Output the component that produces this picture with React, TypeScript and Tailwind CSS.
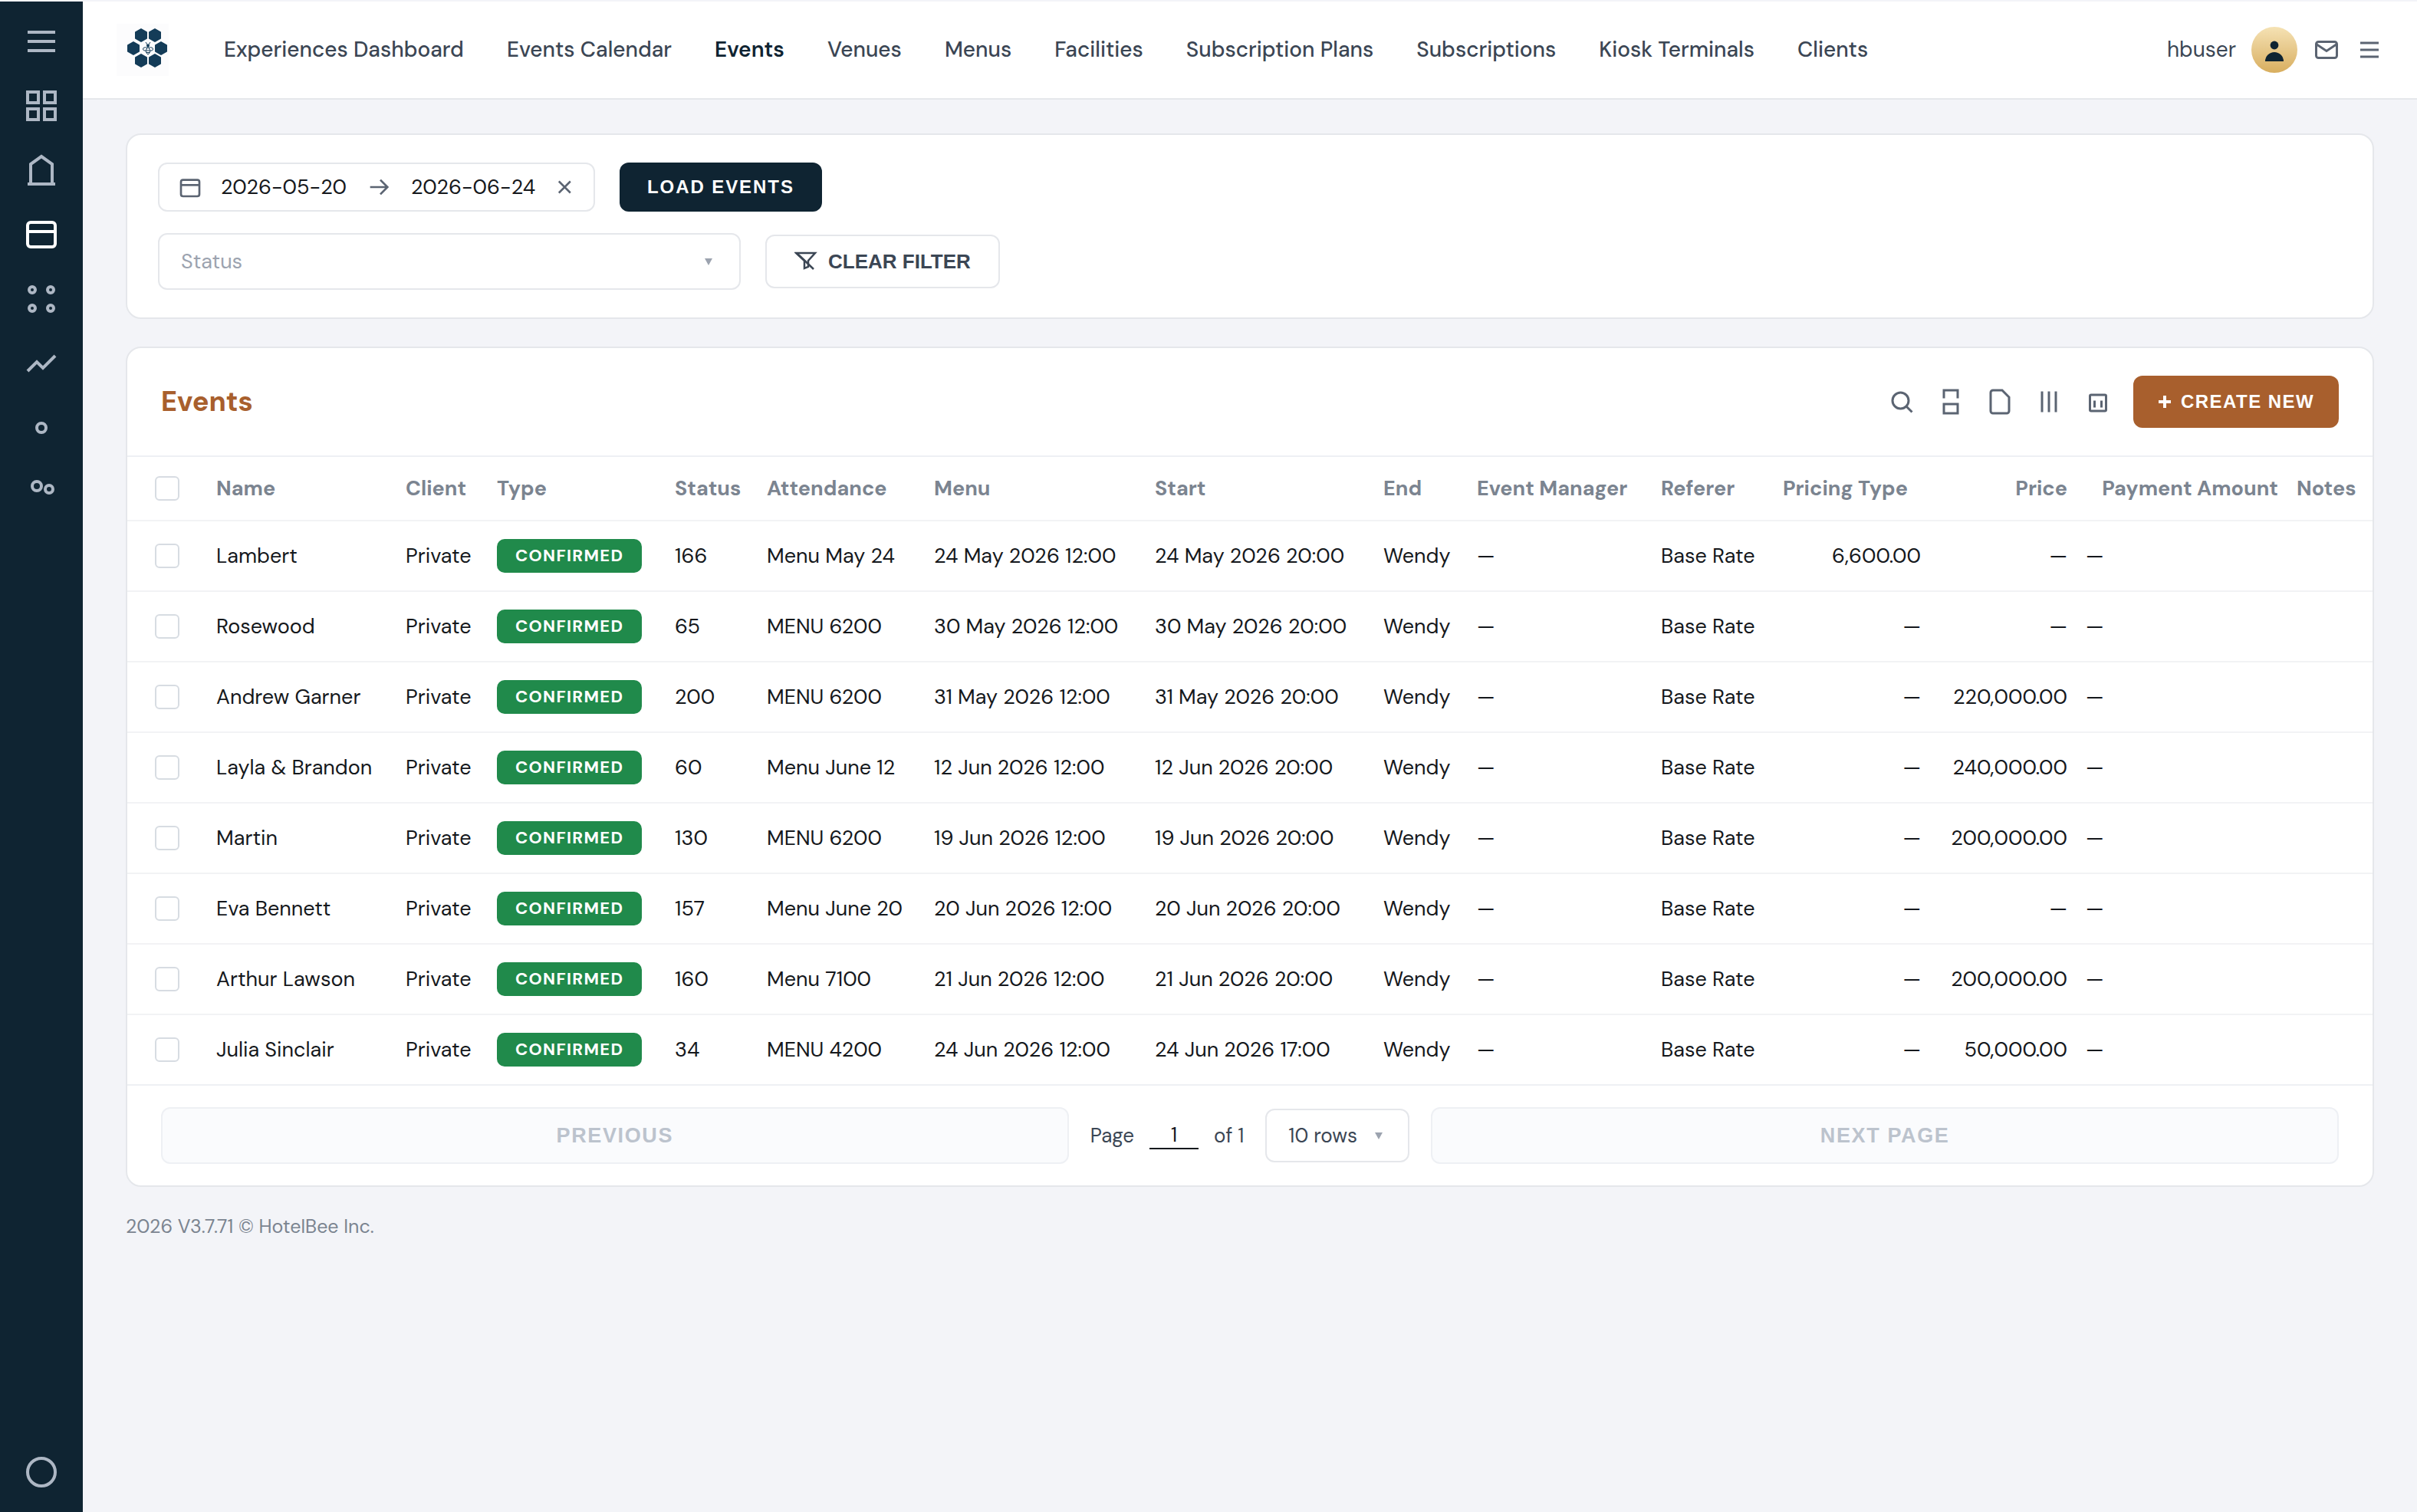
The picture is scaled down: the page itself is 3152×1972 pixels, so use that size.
import React, { useState } from 'react';
import clsx from 'clsx';

const navItems = [
  'Experiences Dashboard',
  'Events Calendar',
  'Events',
  'Venues',
  'Menus',
  'Facilities',
  'Subscription Plans',
  'Subscriptions',
  'Kiosk Terminals',
  'Clients',
];

const columns = [
  { title: 'Name', width: 'w-[247px]' },
  { title: 'Client', width: 'w-[119px]' },
  { title: 'Type', width: 'w-[232px]' },
  { title: 'Status', width: 'w-[120px]' },
  { title: 'Attendance', width: 'w-[218px]' },
  { title: 'Menu', width: 'w-[288px]' },
  { title: 'Start', width: 'w-[298px]' },
  { title: 'End', width: 'w-[122px]' },
  { title: 'Event Manager', width: 'w-[240px]' },
  { title: 'Referer', width: 'w-[159px]' },
  { title: 'Pricing Type', width: 'w-[204px]' },
  { title: 'Price', width: 'w-[191px]', right: true },
  { title: 'Payment Amount', width: 'w-[275px]', right: true },
  { title: 'Notes', width: 'w-[111px]' },
];

const events = [
  { name: 'Lambert', guests: '166', menu: 'Menu May 24', start: '24 May 2026 12:00', end: '24 May 2026 20:00', rate: '6,600.00', price: '—' },
  { name: 'Rosewood', guests: '65', menu: 'MENU 6200', start: '30 May 2026 12:00', end: '30 May 2026 20:00', rate: '—', price: '—' },
  { name: 'Andrew Garner', guests: '200', menu: 'MENU 6200', start: '31 May 2026 12:00', end: '31 May 2026 20:00', rate: '—', price: '220,000.00' },
  { name: 'Layla & Brandon', guests: '60', menu: 'Menu June 12', start: '12 Jun 2026 12:00', end: '12 Jun 2026 20:00', rate: '—', price: '240,000.00' },
  { name: 'Martin', guests: '130', menu: 'MENU 6200', start: '19 Jun 2026 12:00', end: '19 Jun 2026 20:00', rate: '—', price: '200,000.00' },
  { name: 'Eva Bennett', guests: '157', menu: 'Menu June 20', start: '20 Jun 2026 12:00', end: '20 Jun 2026 20:00', rate: '—', price: '—' },
  { name: 'Arthur Lawson', guests: '160', menu: 'Menu 7100', start: '21 Jun 2026 12:00', end: '21 Jun 2026 20:00', rate: '—', price: '200,000.00' },
  { name: 'Julia Sinclair', guests: '34', menu: 'MENU 4200', start: '24 Jun 2026 12:00', end: '24 Jun 2026 17:00', rate: '—', price: '50,000.00' },
];

function Icon({
  className,
  stroke = 2,
  children,
}: {
  className: string;
  stroke?: number;
  children: React.ReactNode;
}) {
  return (
    <svg
      viewBox="0 0 24 24"
      fill="none"
      stroke="currentColor"
      strokeWidth={stroke}
      className={clsx('shrink-0', className)}
      aria-hidden="true"
    >
      {children}
    </svg>
  );
}

const sideIcons = [
  { label: 'Menu', icon: <path d="M3 6h18M3 12h18M3 18h18" /> },
  {
    label: 'Dashboard',
    icon: (
      <>
        <rect x="3" y="3" width="7" height="7" />
        <rect x="14" y="3" width="7" height="7" />
        <rect x="3" y="14" width="7" height="7" />
        <rect x="14" y="14" width="7" height="7" />
      </>
    ),
  },
  { label: 'Property', icon: <path d="M3 21h18M5 21V8l7-5 7 5v13" /> },
  {
    label: 'Events',
    active: true,
    icon: (
      <>
        <rect x="3" y="4" width="18" height="16" rx="2" />
        <path d="M3 10h18" />
      </>
    ),
  },
  {
    label: 'Apps',
    icon: (
      <>
        <circle cx="6" cy="6" r="2" />
        <circle cx="18" cy="6" r="2" />
        <circle cx="6" cy="18" r="2" />
        <circle cx="18" cy="18" r="2" />
      </>
    ),
  },
  { label: 'Reports', icon: <path d="M3 17l6-6 4 4 8-8" /> },
  { label: 'Settings', icon: <circle cx="12" cy="12" r="3" /> },
  {
    label: 'Users',
    icon: (
      <>
        <circle cx="9" cy="8" r="3" />
        <circle cx="17" cy="10" r="2.5" />
      </>
    ),
  },
];

const tools = [
  {
    label: 'Search',
    icon: (
      <>
        <circle cx="11" cy="11" r="7" />
        <path d="M16 16l5 5" />
      </>
    ),
  },
  {
    label: 'Print',
    icon: (
      <>
        <path d="M6 9V2h12v7" />
        <rect x="6" y="14" width="12" height="8" />
      </>
    ),
  },
  {
    label: 'Export',
    icon: <path d="M14 2H6a2 2 0 0 0-2 2v16a2 2 0 0 0 2 2h12a2 2 0 0 0 2-2V8z" />,
  },
  { label: 'Columns', icon: <path d="M6 3v18M12 3v18M18 3v18" /> },
  {
    label: 'Delete',
    icon: (
      <>
        <rect x="5" y="6" width="14" height="14" rx="1" />
        <path d="M9 11v6M15 11v6" />
      </>
    ),
  },
];

function Logo() {
  const cells = [
    [32, 15],
    [50, 15],
    [22, 32],
    [58, 32],
    [32, 48],
    [50, 48],
  ];
  return (
    <svg viewBox="0 0 68 68" className="size-[68px] shrink-0 bg-[#fcfcfd]" aria-label="HotelBee">
      {cells.map(([x, y]) => (
        <path
          key={`${x}-${y}`}
          transform={`translate(${x} ${y})`}
          d="M0-8 7-4V4L0 8-7 4V-4Z"
          fill="#143c58"
          stroke="#143c58"
          strokeWidth="2"
          strokeLinejoin="round"
        />
      ))}
      <g fill="none" stroke="#143c58" strokeWidth="1">
        <path d="M38 24l2 3M44 24l-2 3" />
        <ellipse cx="37.5" cy="33" rx="3" ry="2.2" />
        <ellipse cx="44.5" cy="33" rx="3" ry="2.2" />
      </g>
      <circle cx="41" cy="28.5" r="2" fill="#143c58" />
      <path d="M41 30l3 5-1 3-2 2-2-2-1-3z" fill="#fcfcfd" stroke="#143c58" strokeWidth="1" />
      <path d="M38.5 35h5M39 37.5h4" stroke="#143c58" strokeWidth="1" />
    </svg>
  );
}

function Sidebar() {
  return (
    <aside className="w-[108px] shrink-0 bg-[#0f2432] text-[#adb7c4] flex flex-col items-center justify-between py-7">
      <div className="flex flex-col gap-9">
        {sideIcons.map((item) => (
          <button
            key={item.label}
            type="button"
            aria-label={item.label}
            className={clsx('cursor-pointer', item.active && 'text-white')}
          >
            <Icon className="size-12">{item.icon}</Icon>
          </button>
        ))}
      </div>
      <button type="button" aria-label="Help" className="cursor-pointer">
        <Icon className="size-12">
          <circle cx="12" cy="12" r="9" />
        </Icon>
      </button>
    </aside>
  );
}

function Header() {
  return (
    <header className="h-32 px-11 bg-white border-b-2 border-[#e5e7eb] flex items-center text-[28px] leading-9 text-[#3b4654]">
      <Logo />
      <nav className="ml-18 flex gap-14">
        {navItems.map((item) => (
          <a
            key={item}
            href="#"
            className={clsx('whitespace-nowrap', item === 'Events' ? 'font-semibold text-[#0f2432]' : 'font-medium')}
          >
            {item}
          </a>
        ))}
      </nav>
      <div className="ml-auto flex items-center gap-5 text-[#5b6472]">
        <span className="text-[#3b4654]">hbuser</span>
        <span className="size-[60px] rounded-full bg-linear-to-b from-[#f5e2b4] to-[#d8ae5e] flex items-center justify-center">
          <svg viewBox="0 0 36 36" className="size-9" fill="#0f2432" aria-hidden="true">
            <circle cx="18" cy="12" r="5.4" />
            <path d="M6 33a12 12 0 0 1 24 0z" />
          </svg>
        </span>
        <button type="button" aria-label="Messages" className="cursor-pointer">
          <Icon className="size-9">
            <rect x="3" y="5" width="18" height="14" rx="2" />
            <path d="M3 7l9 6 9-6" />
          </Icon>
        </button>
        <button type="button" aria-label="More" className="cursor-pointer">
          <Icon className="size-9">
            <path d="M4 6h16M4 12h16M4 18h16" />
          </Icon>
        </button>
      </div>
    </header>
  );
}

function Caret({ className }: { className: string }) {
  return (
    <svg viewBox="0 0 10 10" className={clsx('absolute size-[10px] pointer-events-none', className)} aria-hidden="true">
      <path d="M0 0h10L5 9z" fill="#9ca3af" />
    </svg>
  );
}

function Filters() {
  const [from, setFrom] = useState('2026-05-20');
  const [to, setTo] = useState('2026-06-24');

  return (
    <section className="bg-white border-2 border-[#e5e7eb] rounded-[20px] px-10 py-9 flex flex-col gap-7">
      <div className="flex gap-8">
        <div className="h-16 pl-6 pr-[26px] border-2 border-[#e5e7eb] rounded-xl flex items-center gap-6 text-[27px] text-[#5b6472]">
          <Icon className="size-8">
            <rect x="3" y="5" width="18" height="16" rx="2" />
            <path d="M3 10h18" />
          </Icon>
          <input
            aria-label="From date"
            value={from}
            onChange={(e) => setFrom(e.target.value)}
            className="w-[168px] text-[#15181c] outline-none"
          />
          <Icon className="size-8">
            <path d="M2 12h17M12 5l7 7-7 7" />
          </Icon>
          <input
            aria-label="To date"
            value={to}
            onChange={(e) => setTo(e.target.value)}
            className="w-[168px] text-[#15181c] outline-none"
          />
          <button
            type="button"
            aria-label="Clear dates"
            className="cursor-pointer"
            onClick={() => {
              setFrom('');
              setTo('');
            }}
          >
            <Icon className="size-5" stroke={3}>
              <path d="M1 3l18 18M19 3L1 21" />
            </Icon>
          </button>
        </div>
        <button
          type="button"
          className="h-16 px-9 rounded-xl bg-[#0f2432] text-white font-['Liberation_Sans',Arial,sans-serif] font-bold text-2xl tracking-[0.08em] cursor-pointer"
        >
          LOAD EVENTS
        </button>
      </div>
      <div className="flex items-center gap-8">
        <div className="relative w-[760px]">
          <select
            aria-label="Status"
            defaultValue=""
            className="w-full h-[74px] px-7 appearance-none bg-white border-2 border-[#e5e7eb] rounded-xl text-[27px] text-[#9ca3af]"
          >
            <option value="">Status</option>
            <option>Confirmed</option>
          </select>
          <Caret className="right-[37px] top-[33px]" />
        </div>
        <button
          type="button"
          className="h-[70px] px-9 border-2 border-[#e5e7eb] rounded-xl flex items-center gap-3 text-[#3b4654] font-['Liberation_Sans',Arial,sans-serif] font-bold text-[26px] cursor-pointer"
        >
          <svg viewBox="0 0 32 32" className="size-8" fill="none" stroke="currentColor" strokeWidth="2.5" aria-hidden="true">
            <path d="M2 5h25l-9 10v8l-5 2V15z" />
            <path d="M3 5l22 21" />
          </svg>
          CLEAR FILTER
        </button>
      </div>
    </section>
  );
}

function Checkbox({ label }: { label: string }) {
  return (
    <input
      type="checkbox"
      aria-label={label}
      className="block size-8 appearance-none bg-white border-2 border-[#d7dce2] rounded-md checked:bg-[#0f2432]"
    />
  );
}

function EventsTable() {
  return (
    <table className="w-full table-fixed border-separate border-spacing-0 text-[27px] leading-9 whitespace-nowrap">
      <thead>
        <tr className="[&>th]:h-[84px] [&>th]:border-b-2 [&>th]:border-[#f2f3f5] text-[#7b8490]">
          <th className="w-[104px] pl-9">
            <Checkbox label="Select all events" />
          </th>
          {columns.map((c) => (
            <th key={c.title} className={clsx('px-3 font-bold', c.width, c.right ? 'text-right' : 'text-left')}>
              {c.title}
            </th>
          ))}
        </tr>
      </thead>
      <tbody className="text-[#15181c]">
        {events.map((e) => (
          <tr
            key={e.name}
            className="[&>td]:h-[92px] [&>td]:px-3 [&>td]:border-b-2 [&>td]:border-[#f2f3f5] last:[&>td]:border-[#eef0f4]"
          >
            <td>
              <div className="pl-6">
                <Checkbox label={`Select ${e.name}`} />
              </div>
            </td>
            <td>{e.name}</td>
            <td>Private</td>
            <td>
              <span className="h-11 px-6 inline-flex items-center align-middle rounded-[10px] bg-[#208a4b] text-white text-[22px] font-bold tracking-[0.06em]">
                CONFIRMED
              </span>
            </td>
            <td>{e.guests}</td>
            <td>{e.menu}</td>
            <td>{e.start}</td>
            <td>{e.end}</td>
            <td>Wendy</td>
            <td>—</td>
            <td>Base Rate</td>
            <td className="text-right">{e.rate}</td>
            <td className="text-right">{e.price}</td>
            <td>—</td>
            <td />
          </tr>
        ))}
      </tbody>
    </table>
  );
}

const pagerButton =
  "flex-1 h-[74px] rounded-xl border-2 border-[#eef0f4] bg-[#fafbfd] text-[#bcc3cd] font-['Liberation_Sans',Arial,sans-serif] font-bold text-[27px] tracking-[0.06em]";

function Pagination() {
  return (
    <div className="px-11 py-7 flex items-center gap-7">
      <button type="button" disabled className={pagerButton}>
        PREVIOUS
      </button>
      <div className="flex items-center text-[26px] text-[#3b4654]">
        <label htmlFor="page">Page</label>
        <input
          id="page"
          defaultValue="1"
          className="w-16 h-9 mx-5 border-b-2 border-[#15181c] text-center text-[#15181c] outline-none"
        />
        <span>of 1</span>
        <div className="relative ml-7">
          <select
            aria-label="Rows per page"
            className="w-[188px] h-[70px] px-7 appearance-none bg-white border-2 border-[#e5e7eb] rounded-xl"
          >
            <option>10 rows</option>
          </select>
          <Caret className="right-[35px] top-[31px]" />
        </div>
      </div>
      <button type="button" disabled className={pagerButton}>
        NEXT PAGE
      </button>
    </div>
  );
}

export default function App() {
  return (
    <div className="min-h-screen pt-0.5 flex bg-[#f3f4f8] font-['DM_Sans',Inter,sans-serif] text-[#15181c]">
      <Sidebar />
      <div className="flex-1 min-w-0">
        <Header />
        <main className="px-14 pt-11 flex flex-col gap-9">
          <Filters />
          <section className="bg-white border-2 border-[#e5e7eb] rounded-[20px] overflow-hidden">
            <div className="px-11 py-9 border-b-2 border-[#eef0f4] flex items-center justify-between">
              <h1 className="text-4xl font-extrabold text-[#a85f2d]">Events</h1>
              <div className="flex items-center gap-7 text-[#5b6472]">
                {tools.map((tool) => (
                  <button key={tool.label} type="button" aria-label={tool.label} className="cursor-pointer">
                    <Icon className="size-9">{tool.icon}</Icon>
                  </button>
                ))}
                <button
                  type="button"
                  className="h-[68px] px-8 flex items-center gap-3 rounded-xl bg-[#a85f2d] text-white font-['Liberation_Sans',Arial,sans-serif] font-bold text-2xl tracking-[0.06em] cursor-pointer"
                >
                  <svg viewBox="0 0 18 18" className="size-[18px]" stroke="currentColor" strokeWidth="4" aria-hidden="true">
                    <path d="M9 1v16M1 9h16" />
                  </svg>
                  CREATE NEW
                </button>
              </div>
            </div>
            <EventsTable />
            <Pagination />
          </section>
          <footer className="text-[25px] leading-8 text-[#7b8490]">2026 V3.7.71 © HotelBee Inc.</footer>
        </main>
      </div>
    </div>
  );
}
